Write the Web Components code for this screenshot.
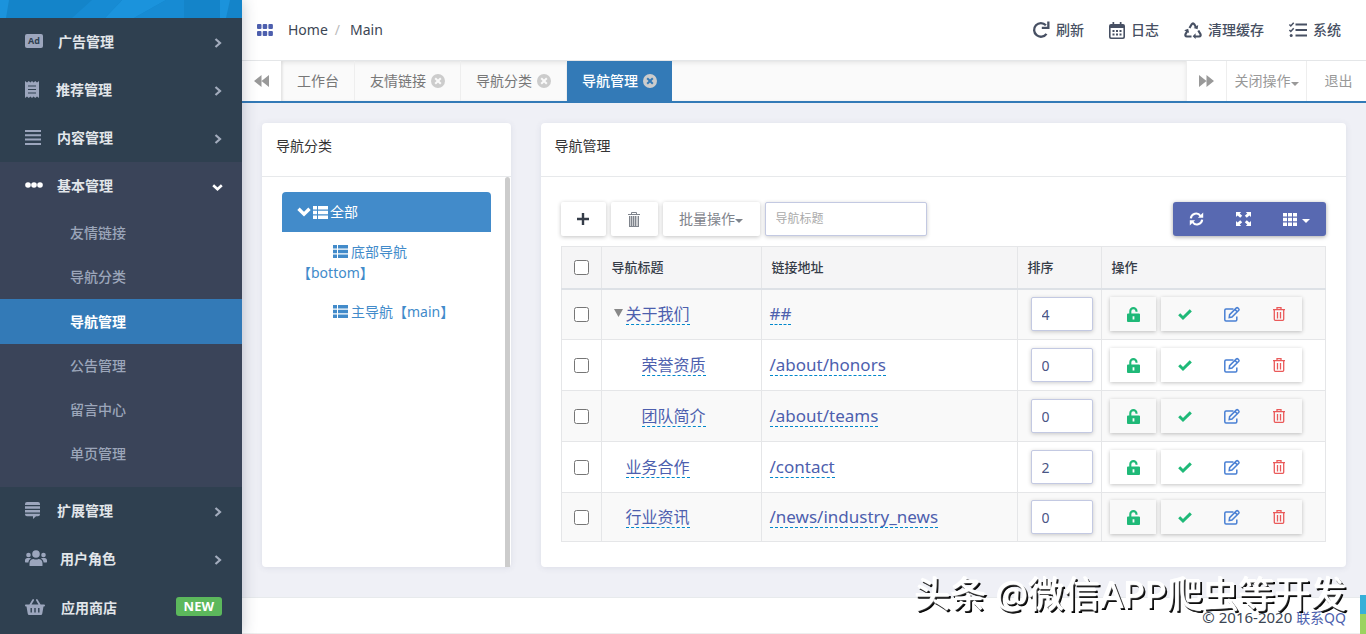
<!DOCTYPE html>
<html lang="zh-CN">
<head>
<meta charset="utf-8">
<title>导航管理</title>
<style>
  body {
    margin: 0;
    background: #eff0f6;
    color: #333;
    font: 14px/20px "Noto Sans", "Noto Sans CJK SC", sans-serif;
    text-spacing-trim: space-all;
  }
</style>
</head>
<body>
<admin-shell>
  <side-nav slot="side">
    <nav-item icon="ad" icon-width="18" gap="15">广告管理</nav-item>
    <nav-item icon="receipt" icon-width="14" gap="17">推荐管理</nav-item>
    <nav-item icon="lines" icon-width="16" gap="16">内容管理</nav-item>
    <nav-group>
      <nav-item open icon="dots" icon-width="18" gap="14">基本管理</nav-item>
      <nav-link slot="sub">友情链接</nav-link>
      <nav-link slot="sub">导航分类</nav-link>
      <nav-link slot="sub" active>导航管理</nav-link>
      <nav-link slot="sub">公告管理</nav-link>
      <nav-link slot="sub">留言中心</nav-link>
      <nav-link slot="sub">单页管理</nav-link>
    </nav-group>
    <nav-item icon="stack" icon-width="15" gap="17">扩展管理</nav-item>
    <nav-item icon="users" icon-width="22" gap="13">用户角色</nav-item>
    <nav-item icon="basket" icon-width="20" gap="16" badge="NEW">应用商店</nav-item>
  </side-nav>

  <top-bar slot="top">
    <top-action icon="redo">刷新</top-action>
    <top-action icon="calendar">日志</top-action>
    <top-action icon="recycle">清理缓存</top-action>
    <top-action icon="tasks">系统</top-action>
  </top-bar>

  <tab-bar slot="tabs">
    <tab-item>工作台</tab-item>
    <tab-item closable>友情链接</tab-item>
    <tab-item closable>导航分类</tab-item>
    <tab-item closable active>导航管理</tab-item>
  </tab-bar>

  <panel-card slot="aside" heading="导航分类" rail><category-tree></category-tree></panel-card>
  <panel-card slot="main" heading="导航管理">
    <table-toolbar></table-toolbar>
    <menu-table></menu-table>
  </panel-card>

  <page-footer slot="foot"></page-footer>
</admin-shell>
<water-mark>头条 @微信APP爬虫等开发</water-mark>
<color-strip></color-strip>

<script>
const define = (name, markup) => {
  const base = `<style>
    *, ::before, ::after { box-sizing: border-box; }
    :host { display: block; }
    a { color: inherit; text-decoration: none; }
    button { font: inherit; color: inherit; margin: 0; padding: 0; border: 0; background: none; cursor: pointer; }
  </style>`;
  customElements.define(name, class extends HTMLElement {
    connectedCallback() {
      if (this.shadowRoot) return;
      const template = document.createElement('template');
      template.innerHTML = base + (typeof markup === 'function' ? markup(this) : markup);
      this.attachShadow({ mode: 'open' }).append(template.content.cloneNode(true));
    }
  });
};

/* name: [width, height, drawing] */
const ICONS = {
  ad: [18, 14, '<rect width="18" height="14" rx="2"/><text x="9" y="10" text-anchor="middle" font-family="Open Sans" font-weight="700" font-size="9" style="fill:#2f4050">Ad</text>'],
  receipt: [14, 17, '<path fill-rule="evenodd" d="M0 0l2 1.5L3.8 0l1.6 1.5L7 0l1.6 1.5L10.200 0 12 1.500 14 0v17l-2-1.500-1.800 1.500-1.600-1.500L7 17l-1.600-1.500L3.800 17 2 15.500 0 17zM3 4.500v1h8v-1zM3 8v1h8V8zM3 11.500v1h8v-1z"/>'],
  lines: [16, 15, '<path d="M0 0h16v2H0zM0 4.300h16v2H0zM0 8.600h16v2H0zM0 13h16v2H0z"/>'],
  dots: [18, 6, '<circle cx="3" cy="3" r="2.800"/><circle cx="9" cy="3" r="2.800"/><circle cx="15" cy="3" r="2.800"/>'],
  stack: [15, 17, '<path d="M2 0h11q2 0 2 2v1H0V2q0-2 2-2zM0 4.200h15v2.600H0zM0 8h15v2.600H0zM0 11.800h15v.500q0 2-2 2h-2L8 17v-2.700H2q-2 0-2-2z"/>'],
  users: [22, 16, '<circle cx="11" cy="4" r="3.800"/><circle cx="3.500" cy="5" r="2.300"/><circle cx="18.500" cy="5" r="2.300"/><path d="M4.500 15.500v-2.300C4.500 10.500 6.500 9 8.500 9q2.500 1 5 0c2 0 4 1.500 4 4.200v2.300q0 .5-.5.500H5q-.5 0-.5-.5zM0 12v-1.500C0 9 1 8 2.300 8h2.400q.8 0 1.500.5C4.500 9.400 3.600 10.600 3.400 12.500H.5zM22 12v-1.500C22 9 21 8 19.700 8h-2.400q-.8 0-1.500.5c1.700.9 2.600 2.100 2.800 4h2.900z"/>'],
  basket: [20, 16, '<path fill-rule="evenodd" d="M4.400 5.500 7.400.5q.5-.7 1.200-.3t.3 1.200L6.500 5.500h7L11.100 1.400q-.4-.8.300-1.200t1.200.3l3 5H19q1 0 1 .9t-1 1.100h-.5l-1.200 7q-.2 1.500-1.600 1.500H4.300q-1.400 0-1.600-1.500l-1.200-7H1q-1 0-1-1.100t1-.9zM5.500 9v4.500h1.400V9zm3.800 0v4.500h1.400V9zm3.800 0v4.500h1.400V9z"/>'],
  right: [8, 10, '<path d="M1.500 1 6 5 1.500 9" fill="none" stroke="currentColor" stroke-width="2.200"/>'],
  down: [11, 7, '<path d="M1.200 1.200 5.500 5.200 9.800 1.200" fill="none" stroke="currentColor" stroke-width="2.600"/>'],
  grid6: [16, 12, '<rect width="4.500" height="5" rx="1"/><rect x="5.700" width="4.500" height="5" rx="1"/><rect x="11.400" width="4.500" height="5" rx="1"/><rect y="7" width="4.500" height="5" rx="1"/><rect x="5.700" y="7" width="4.500" height="5" rx="1"/><rect x="11.400" y="7" width="4.500" height="5" rx="1"/>'],
  redo: [18, 18, '<path d="M14.500 12.800A6.800 6.800 0 1 1 13.900 4.300" fill="none" stroke="currentColor" stroke-width="2.300"/><path d="M15.200.5H17.500V8H9.800V5.700h5.400z"/>'],
  calendar: [16, 17, '<path fill-rule="evenodd" d="M3.500 0h1.700v2h5.600V0h1.700v2H14q2 0 2 2v11q0 2-2 2H2q-2 0-2-2V4q0-2 2-2h1.500zM1.600 6v8.700q0 .8.800.8h11.200q.8 0 .8-.8V6z"/><path d="M3.500 8h2v2h-2zM7 8h2v2H7zM10.500 8h2v2h-2zM3.500 11.500h2v2h-2zM7 11.500h2v2H7zM10.500 11.500h2v2h-2z"/>'],
  recycle: [18, 17, '<g fill="none" stroke="currentColor" stroke-width="2.200"><path d="M5.500 6 7.700 2.300Q9 .3 10.300 2.300L12 5.200"/><path d="M14.300 8.500 16.400 12q1 2.300-1.400 2.500H11"/><path d="M7.500 14.500H3Q.6 14.300 1.600 12L3.500 8.800"/></g><path d="M14.200 3l-.6 4.300-4-1.400zM11.600 11.300v5.700L8.700 14.200zM.2 8.200 4.200 6.800l.9 4.200z"/>'],
  tasks: [18, 16, '<path d="M6.500 1.500H18v2H6.500zM6.500 7H18v2H6.500zM6.500 12.500H18v2H6.500z"/><circle cx="2.200" cy="13.500" r="1.500"/><path d="M.4 2.500 1.800 4 4.700.8M.4 8 1.800 9.500 4.700 6.300" fill="none" stroke="currentColor" stroke-width="1.500"/>'],
  back: [15, 12, '<path d="M7.500 0v12L0 6zM15 0v12L7.500 6z"/>'],
  forward: [15, 12, '<path d="M0 0v12l7.500-6zM7.500 0v12L15 6z"/>'],
  close: [14, 14, '<path fill-rule="evenodd" d="M7 0a7 7 0 1 1 0 14A7 7 0 0 1 7 0zM4.900 3.500 3.500 4.900 5.600 7 3.500 9.100l1.400 1.400L7 8.400l2.100 2.100 1.400-1.400L8.400 7l2.100-2.100-1.400-1.400L7 5.600z"/>'],
  caret: [8, 4, '<path d="M0 0h8L4 4z"/>'],
  triangle: [9, 8, '<path d="M0 0h9L4.500 8z"/>'],
  chevron: [14, 10, '<path d="M1.500 1.800 7 7.200l5.500-5.400" fill="none" stroke="currentColor" stroke-width="3.400"/>'],
  list: [15, 13, '<path d="M0 0h4v3.600H0zM5 0h10v3.600H5zM0 4.700h4v3.600H0zM5 4.700h10v3.600H5zM0 9.400h4V13H0zM5 9.400h10V13H5z"/>'],
  plus: [12, 12, '<path d="M4.800 0h2.400v4.800H12v2.400H7.200V12H4.800V7.200H0V4.800h4.800z"/>'],
  bin: [12, 15, '<path d="M3.500.500h5v1.500M3.500 2V.500M0 2.500h12" fill="none" stroke="currentColor"/><path d="M1 4h10v11H1z" opacity=".4"/><path d="M1 4h1v11H1zM3 4h1v10H3zM5 4h1v10H5zM7 4h1v10H7zM10 4h1v11h-1zM1 14h10v1H1z"/>'],
  sync: [15, 14, '<path d="M1.800 6.300A5.300 5.300 0 0 1 11.500 4M13.200 7.700A5.300 5.300 0 0 1 3.500 10" fill="none" stroke="currentColor" stroke-width="2.100"/><path d="M14.200.5v5.300H8.900zM.8 13.500V8.200h5.300z"/>'],
  expand: [15, 14, '<path d="M0 0h5.200L3.700 1.500l2.500 2.300-2 2L1.600 3.400 0 5zM15 0H9.800l1.500 1.500-2.500 2.300 2 2 2.600-2.400L15 5zM0 14h5.200l-1.500-1.500 2.500-2.300-2-2-2.600 2.400L0 9zM15 14H9.800l1.500-1.500-2.500-2.300 2-2 2.600 2.400L15 9z"/>'],
  grid9: [14, 13, '<path d="M0 0h4v3.600H0zM5 0h4v3.600H5zM10 0h4v3.600h-4zM0 4.700h4v3.600H0zM5 4.700h4v3.600H5zM10 4.700h4v3.600h-4zM0 9.400h4V13H0zM5 9.400h4V13H5zM10 9.400h4V13h-4z"/>'],
  lock: [13, 15, '<path fill-rule="evenodd" d="M1 6.500h11q1 0 1 1V14q0 1-1 1H1q-1 0-1-1V7.500q0-1 1-1zm4.600 2.700v3.200h1.800V9.200z"/><path d="M3.300 7V4.200a3.100 3.100 0 0 1 6.200 0v.6" fill="none" stroke="currentColor" stroke-width="2.100"/>'],
  check: [14, 11, '<path d="M1.200 5.300 5 9l7.800-7.600" fill="none" stroke="currentColor" stroke-width="3"/>'],
  edit: [16, 15, '<g fill="none" stroke="currentColor" stroke-width="1.500"><path d="M9.500 2H2Q.8 2 .8 3.200v9.600Q.8 14 2 14h9.600q1.200 0 1.200-1.200V9.500"/><path d="M5.200 10.500 5.600 7.600 12.400.9q.7-.6 1.400 0l1 1q.6.700 0 1.400L8 10.100zM11 2.500l2.400 2.400"/></g>'],
  trash: [12, 14, '<g fill="none" stroke="currentColor" stroke-width="1.300"><path d="M0 2.700h12M4 2.500V.7h4v1.800M1.300 3v9.300q0 1 1 1h7.400q1 0 1-1V3"/><path d="M4.500 5v6.500M7.500 5v6.500"/></g>']
};

define('ui-icon', el => {
  const [w, h, d] = ICONS[el.getAttribute('name')];
  return `<style>
    :host { display: inline-flex; flex: none; }
    svg { display: block; fill: currentColor; overflow: visible; }
  </style><svg width="${w}" height="${h}" viewBox="0 0 ${w} ${h}" aria-hidden="true">${d}</svg>`;
});

define('admin-shell', `<style>
  :host { display: flex; height: 100vh; overflow: hidden; }
  .side { flex: none; width: 242px; position: relative; z-index: 1; }
  .page { flex: 1; min-width: 0; display: flex; flex-direction: column; }
  main { flex: none; padding: 20px 20px 30px; }
  .row { display: flex; margin: 0 -15px; }
  .col { padding: 0 15px; display: grid; }
  .narrow { width: 25%; }
  .wide { width: 75%; }
  .foot { flex: 1; display: grid; }
</style>
<div class="side"><slot name="side"></slot></div>
<div class="page">
  <slot name="top"></slot>
  <slot name="tabs"></slot>
  <main><div class="row">
    <div class="col narrow"><slot name="aside"></slot></div>
    <div class="col wide"><slot name="main"></slot></div>
  </div></main>
  <div class="foot"><slot name="foot"></slot></div>
</div>`);

define('side-nav', `<style>
  :host { background: #2f4050; height: 100%; box-shadow: 0 0 14px rgba(40, 50, 70, .28); }
  .banner { display: block; width: 100%; height: 18px; background: #1484c9; }
</style>
<svg class="banner" viewBox="0 0 242 18" preserveAspectRatio="none" aria-hidden="true">
  <path fill="#1b93dc" d="M0 0h9L6 18H0zM122 0h44l-32 18h-29zM220 0h10l-4 18h-6z"/>
  <path fill="#178bd3" d="M92 0h30l-17 18H72zM166 0h18v18h-50z"/>
</svg>
<nav><slot></slot></nav>`);

define('nav-group', `<style>
  :host { background: #3a4459; }
  .sub { padding: 1px 0 11px; }
</style><slot></slot><div class="sub"><slot name="sub"></slot></div>`);

define('nav-item', el => `<style>
  a { display: flex; align-items: center; height: 48px; padding: 0 20px 0 25px; font-weight: 700; color: #e2e6ea; }
  :host([badge]) a { height: 50px; }
  .icon { width: ${el.getAttribute('icon-width')}px; margin-right: ${el.getAttribute('gap')}px; display: flex; color: #9ca6bd; padding-bottom: 2px; }
  .label { flex: 1; }
  .end { width: 8px; color: #a3acbd; display: flex; justify-content: center; padding-top: 1px; }
  :host([open]) .icon, :host([open]) .end { color: #fff; }
  :host([open]) .end { width: 10px; padding-top: 3px; }
  .badge { background: #5cb85c; color: #fff; border-radius: 3px; font-size: 13px; line-height: 19px; padding: 0 8px; margin-bottom: 4px; }
</style>
<a href="#"><span class="icon"><ui-icon name="${el.getAttribute('icon')}"></ui-icon></span>
<span class="label"><slot></slot></span>
${el.hasAttribute('badge') ? `<span class="badge">${el.getAttribute('badge')}</span>`
  : `<span class="end"><ui-icon name="${el.hasAttribute('open') ? 'down' : 'right'}"></ui-icon></span>`}</a>`);

define('nav-link', `<style>
  a { display: flex; align-items: center; height: 44px; padding-left: 70px; font-weight: 500; color: #9ca6ba; }
  :host([active]) a { height: 45px; background: #337ab7; color: #fff; font-weight: 700; }
</style><a href="#"><slot></slot></a>`);

define('top-bar', `<style>
  :host { flex: none; }
  header { display: flex; align-items: center; height: 61px; padding: 0 25px 0 15px; background: #fff; border-bottom: 1px solid #e4e6e8; }
  ui-icon { color: #4d5fae; margin-right: 15px; }
  .trail { flex: 1; display: flex; color: #3c4654; }
  .slash { color: #bbb; margin: 0 10px 0 7px; }
  .actions { display: flex; gap: 25px; }
</style>
<header>
  <ui-icon name="grid6"></ui-icon>
  <div class="trail"><a href="#">Home</a><span class="slash">/</span><a href="#">Main</a></div>
  <div class="actions"><slot></slot></div>
</header>`);

define('top-action', el => `<style>
  button { display: flex; align-items: center; gap: 6px; color: #475063; font-weight: 500; }
</style><button type="button"><ui-icon name="${el.getAttribute('icon')}"></ui-icon><span><slot></slot></span></button>`);

define('tab-bar', `<style>
  :host { flex: none; }
  .bar { display: flex; height: 42px; background: #fff; border-bottom: 2px solid #337ab7; color: #999; }
  .bar button { display: flex; align-items: center; justify-content: center; }
  .step { width: 39px; }
  .tabs { flex: 1; display: flex; background: #fafafa; padding-left: 1px; box-shadow: inset 0 2px 4px rgba(0, 0, 0, .08), inset 2px 0 2px rgba(0, 0, 0, .05); }
  .next, .menu, .exit { border-left: 1px solid #eee; }
  .step.next { width: 40px; }
  .menu { width: 80px; }
  .menu ui-icon { padding-top: 5px; }
  .exit { width: 60px; padding-left: 4px; }
</style>
<div class="bar">
  <button class="step" type="button" aria-label="向左"><ui-icon name="back"></ui-icon></button>
  <div class="tabs"><slot></slot></div>
  <button class="step next" type="button" aria-label="向右"><ui-icon name="forward"></ui-icon></button>
  <button class="menu" type="button">关闭操作<ui-icon name="caret"></ui-icon></button>
  <button class="exit" type="button">退出</button>
</div>`);

define('tab-item', el => `<style>
  a { display: flex; align-items: center; height: 40px; padding: 0 15px; border-right: 1px solid #eee; color: #777; gap: 5px; }
  :host([closable]) a { width: 106px; }
  :host([active]) a { width: 105px; background: #337ab7; color: #fff; border: 0; font-weight: 500; }
  .label { padding-bottom: 1px; }
  ui-icon { color: #ccc; }
</style><a href="#"><span class="label"><slot></slot></span>${el.hasAttribute('closable') ? '<ui-icon name="close"></ui-icon>' : ''}</a>`);

define('panel-card', el => `<style>
  :host { display: flex; flex-direction: column; background: #fff; border-radius: 4px; box-shadow: 0 1px 6px rgba(60, 70, 110, .1); }
  h2 { margin: 0; font-size: 14px; line-height: 20px; font-weight: 400; padding: 13px 14px 20px; border-bottom: 1px solid #e7e9eb; }
  .body { flex: 1; display: flex; }
  .content { flex: 1; min-width: 0; padding: 25px 20px; }
  :host([rail]) .content { padding: 15px 14px 15px 20px; }
  .rail { width: 5px; margin-right: 1px; background: #ccc; border-radius: 3px 3px 0 0; }
</style>
<h2>${el.getAttribute('heading')}</h2>
<div class="body"><div class="content"><slot></slot></div>${el.hasAttribute('rail') ? '<div class="rail"></div>' : ''}</div>`);

define('category-tree', `<style>
  ul { list-style: none; margin: 0; padding: 0; color: #428bca; }
  a { display: block; padding: 10px 15px; }
  .all { display: flex; align-items: center; gap: 2px; background: #428bca; color: #fff; border-radius: 4px 4px 0 0; }
  .child { padding: 9px 15px; line-height: 21px; text-indent: 36px; }
  .child ui-icon { vertical-align: -1px; margin-right: 3px; text-indent: 0; }
</style>
<ul>
  <li><a class="all" href="#"><ui-icon name="chevron"></ui-icon><ui-icon name="list"></ui-icon>全部</a></li>
  <li><a class="child" href="#"><ui-icon name="list"></ui-icon>底部导航【bottom】</a></li>
  <li><a class="child" href="#"><ui-icon name="list"></ui-icon>主导航【main】</a></li>
</ul>`);

define('table-toolbar', `<style>
  .bar { display: flex; gap: 5px; height: 34px; margin-bottom: 10px; }
  .bar button { display: flex; align-items: center; justify-content: center; border-radius: 2px; }
  .tool { box-shadow: 0 1px 4px rgba(0, 0, 0, .24); color: #7f848c; }
  .add { width: 45px; color: #353c48; }
  .del { width: 47px; }
  .batch { width: 97px; }
  .batch ui-icon, .view ui-icon + ui-icon { padding-top: 4px; }
  input { width: 162px; border: 1px solid #c3c9e2; border-radius: 2px; padding: 0 10px; font: inherit; font-size: 12px; color: #4a5585; box-shadow: 0 1px 4px rgba(0, 0, 0, .2); outline: 0; }
  input::placeholder { color: #aaa; }
  .view { display: flex; margin-left: auto; background: #5869b1; color: #fff; border-radius: 3px; box-shadow: 0 1px 4px rgba(0, 0, 0, .35); }
  .view button { width: 47px; }
  .view .cols { width: 59px; gap: 5px; }
</style>
<div class="bar">
  <button class="tool add" type="button" aria-label="添加"><ui-icon name="plus"></ui-icon></button>
  <button class="tool del" type="button" aria-label="删除"><ui-icon name="bin"></ui-icon></button>
  <button class="tool batch" type="button">批量操作<ui-icon name="caret"></ui-icon></button>
  <input type="text" placeholder="导航标题" aria-label="导航标题">
  <div class="view">
    <button type="button" aria-label="刷新"><ui-icon name="sync"></ui-icon></button>
    <button type="button" aria-label="全屏"><ui-icon name="expand"></ui-icon></button>
    <button class="cols" type="button" aria-label="列"><ui-icon name="grid9"></ui-icon><ui-icon name="caret"></ui-icon></button>
  </div>
</div>`);

const ROWS = [
  { title: '关于我们', url: '##', sort: 4, parent: true },
  { title: '荣誉资质', url: '/about/honors', sort: 0, child: true },
  { title: '团队简介', url: '/about/teams', sort: 0, child: true },
  { title: '业务合作', url: '/contact', sort: 2 },
  { title: '行业资讯', url: '/news/industry_news', sort: 0 }
];

define('menu-table', () => `<style>
  table { width: 100%; table-layout: fixed; border-collapse: collapse; }
  th, td { border: 1px solid #e5e6e8; padding: 0 8px; text-align: left; }
  th { height: 42px; background: #f5f5f6; border-bottom: 2px solid #dde1e6; padding: 0 10px; font-size: 13px; font-weight: 500; color: #353c48; }
  td { height: 51px; font-size: 16px; }
  tr:last-child td { height: 49px; }
  tbody tr:nth-child(odd) { background: #f9f9f9; }
  th.pick, td.pick { padding: 0; text-align: center; }
  .pick input { display: block; width: 15px; height: 15px; margin: 0 auto; }
  .title { width: 160px; } .url { width: 256px; } .sort { width: 84px; } .pick { width: 40px; }
  td.title { padding-left: 24px; }
  td.child { padding-left: 40px; }
  td.parent { padding-left: 12px; }
  td.parent ui-icon { color: #888; margin-right: 3px; vertical-align: 3px; }
  td.url { font-size: 17px; }
  td a { display: inline-block; line-height: 20px; color: #4d5fae; border-bottom: 1px dashed #0088cc; }
  td.sort { padding: 0 8px 0 13px; }
  .sort input { display: block; width: 62px; height: 34px; border: 1px solid #c3c9e2; border-radius: 2px; padding: 0 10px; background: #fff; font: inherit; font-size: 14px; color: #4a5585; box-shadow: 0 1px 4px rgba(0, 0, 0, .2); outline: 0; }
  .ops { display: flex; gap: 5px; }
  .set { display: flex; box-shadow: 0 1px 4px rgba(0, 0, 0, .24); }
  .set button { width: 47px; height: 34px; padding-left: 1px; display: flex; align-items: center; justify-content: center; }
  .set .lock { width: 46px; }
  .ok { color: #1fb978; } .edit { color: #4a80d4; } .del { color: #ea5a5a; }
</style>
<table>
  <thead><tr>
    <th class="pick"><input type="checkbox" aria-label="全选"></th>
    <th class="title">导航标题</th><th class="url">链接地址</th><th class="sort">排序</th><th>操作</th>
  </tr></thead>
  <tbody>${ROWS.map(r => `<tr>
    <td class="pick"><input type="checkbox" aria-label="选择 ${r.title}"></td>
    <td class="title${r.child ? ' child' : ''}${r.parent ? ' parent' : ''}">${r.parent ? '<ui-icon name="triangle"></ui-icon>' : ''}<a href="#">${r.title}</a></td>
    <td class="url"><a href="#">${r.url}</a></td>
    <td class="sort"><input type="text" value="${r.sort}" aria-label="${r.title} 排序"></td>
    <td><div class="ops">
      <div class="set"><button class="lock ok" type="button" aria-label="锁定"><ui-icon name="lock"></ui-icon></button></div>
      <div class="set">
        <button class="ok" type="button" aria-label="启用"><ui-icon name="check"></ui-icon></button>
        <button class="edit" type="button" aria-label="编辑"><ui-icon name="edit"></ui-icon></button>
        <button class="del" type="button" aria-label="删除"><ui-icon name="trash"></ui-icon></button>
      </div>
    </div></td>
  </tr>`).join('')}</tbody>
</table>`);

define('page-footer', `<style>
  :host { background: #fff; border-top: 1px solid #e7eaec; }
  footer { padding: 9px 20px 5px; text-align: right; font-size: 15px; color: #3c4654; border-bottom: 1px solid #eee; }
  a { color: #4d5fae; font-size: 14px; }
</style><footer>© 2016-2020 <a href="#">联系QQ</a></footer>`);

define('water-mark', `<style>
  :host { position: fixed; right: 19px; bottom: 14px; z-index: 3; pointer-events: none; white-space: nowrap;
    font: 36px/50px "Noto Sans", "Noto Sans CJK SC", sans-serif; color: #fff;
    text-shadow: -1px -1px 0 #fff, 0 0 2px #fff, 2px 2px 0 #000, 1px 2px 0 #000; }
</style><slot></slot>`);

define('color-strip', `<style>
  :host { position: fixed; right: 0; bottom: 0; z-index: 2; width: 6px; }
  .blue { height: 19px; background: #36b0d8; }
  .green { height: 20px; background: #9bd35f; }
</style><div class="blue"></div><div class="green"></div>`);
</script>
</body>
</html>
